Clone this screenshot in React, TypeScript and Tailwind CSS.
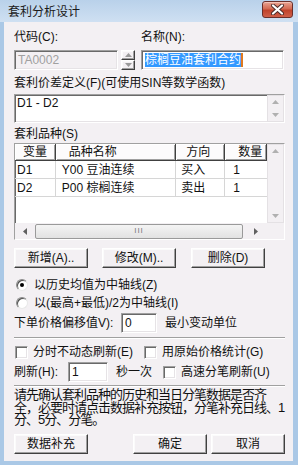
import React from 'react';

// 套利分析设计 — Win 经典风格对话框

const sunken =
  'border border-t-[#a0a0a0] border-l-[#a0a0a0] border-b-white border-r-white shadow-[inset_1px_1px_0_#696969,inset_-1px_-1px_0_#e6e3e6]';
const raised =
  'border border-t-white border-l-white border-b-[#404040] border-r-[#404040] shadow-[inset_-1px_-1px_0_#a0a0a0,inset_1px_1px_0_#fbfbfb]';

type Dir = 'up' | 'down' | 'left' | 'right';

function Tri({ dir, color = '#8a8a8a' }: { dir: Dir; color?: string }) {
  const pts: Record<Dir, string> = {
    up: '0,4 3.5,0 7,4',
    down: '0,0 3.5,4 7,0',
    left: '4,0 0,3.5 4,7',
    right: '0,0 4,3.5 0,7',
  };
  const horiz = dir === 'up' || dir === 'down';
  return (
    <svg width={horiz ? 7 : 4} height={horiz ? 4 : 7} viewBox={horiz ? '0 0 7 4' : '0 0 4 7'}>
      <polygon points={pts[dir]} fill={color} />
    </svg>
  );
}

function Btn({ children, className = '' }: { children: React.ReactNode; className?: string }) {
  return (
    <div className={`flex h-[20px] w-[74px] items-center justify-center bg-[#f3f0f3] ${raised} ${className}`}>
      {children}
    </div>
  );
}

function Check({ className = '' }: { className?: string }) {
  return <div className={`h-[13px] w-[13px] shrink-0 bg-white ${sunken} ${className}`} />;
}

function Radio({ checked }: { checked?: boolean }) {
  return (
    <div className="flex h-[12px] w-[12px] shrink-0 items-center justify-center rounded-full border border-t-[#8a8a8a] border-l-[#8a8a8a] border-b-[#e8e8e8] border-r-[#e8e8e8] bg-white shadow-[inset_1px_1px_0_#505050]">
      {checked && <div className="h-[4px] w-[4px] rounded-full bg-black" />}
    </div>
  );
}

function CloseBtn() {
  return (
    <div className="flex h-[17px] w-[31px] items-center justify-center rounded-[3px] border border-[#6b2f2a] bg-[linear-gradient(#e9a493,#d46a52_45%,#c0432b_55%,#d0604a)] shadow-[inset_0_1px_0_#f3c2b6]">
      <svg width="13" height="11" viewBox="0 0 13 11">
        <path d="M2 1.5 L11 9.5 M11 1.5 L2 9.5" stroke="#4a2a28" strokeWidth="4" strokeLinecap="round" />
        <path d="M2 1.5 L11 9.5 M11 1.5 L2 9.5" stroke="#ffffff" strokeWidth="2.2" strokeLinecap="round" />
      </svg>
    </div>
  );
}

const rows = [
  { v: 'D1', name: 'Y00 豆油连续', dir: '买入', qty: '1' },
  { v: 'D2', name: 'P00 棕榈连续', dir: '卖出', qty: '1' },
];

const cols = ['w-[41px]', 'w-[121px]', 'w-[49px]', 'w-[42px]'];
const heads = [
  { t: '变量', pad: 'pl-[8px]' },
  { t: '品种名称', pad: 'pl-[13px]' },
  { t: '方向', pad: 'pl-[10px]' },
  { t: '数量', pad: 'pl-[13px]' },
];

export default function App() {
  return (
    <div className="h-[465px] w-[298px] bg-[#aac8e6] pb-[4px] pl-[4px] pr-[5px] font-['Liberation_Sans','Noto_Sans_CJK_SC',sans-serif] text-[12px] leading-[14px] text-[#111]">
      <div className="-ml-[4px] -mr-[5px] flex h-[22px] items-center justify-between bg-[linear-gradient(#b9d1ea,#cfe0f2)] pl-[8px] pr-[5px] pt-[1px]">
        <span className="text-[12px] text-[#1a1a1a]">套利分析设计</span>
        <div className="-mt-[4px]">
          <CloseBtn />
        </div>
      </div>

      <div className="flex h-[439px] flex-col bg-[#f3f0f3] pl-[10px] pr-[8px] pt-[8px]">
        {/* 代码 / 名称 */}
        <div className="flex h-[14px]">
          <span className="w-[127px]">代码(C):</span>
          <span>名称(N):</span>
        </div>
        <div className="mt-[6px] flex h-[20px]">
          <div className={`flex w-[104px] items-center pl-[3px] text-[#a0a0a0] ${sunken} bg-[#f3f0f3]`}>TA0002</div>
          <div className="ml-[3px] flex w-[14px] flex-col">
            <div className={`flex h-[10px] items-center justify-center ${raised} bg-[#f3f0f3]`}>
              <Tri dir="up" color="#9a9a9a" />
            </div>
            <div className={`flex h-[10px] items-center justify-center ${raised} bg-[#f3f0f3]`}>
              <Tri dir="down" color="#9a9a9a" />
            </div>
          </div>
          <div className={`ml-[6px] flex w-[143px] items-center bg-white pl-[3px] ${sunken}`}>
            <span className="bg-[#3399ff] text-white">棕榈豆油套利合约</span>
            <span className="h-[14px] w-[2px] bg-[#e07a1f]" />
          </div>
        </div>

        {/* 价差定义 */}
        <div className="mt-[6px] h-[14px]">套利价差定义(F)(可使用SIN等数学函数)</div>
        <div className={`mt-[4px] flex h-[29px] w-[271px] bg-white ${sunken}`}>
          <div className="flex-1 pl-[2px] pt-[1px]">D1 - D2</div>
          <div className="flex w-[17px] flex-col items-center justify-between border border-[#e4e1e4] bg-[#f3f0f3] py-[4px]">
            <Tri dir="up" color="#b0b0b0" />
            <Tri dir="down" color="#b0b0b0" />
          </div>
        </div>

        {/* 套利品种 */}
        <div className="mt-[4px] h-[14px]">套利品种(S)</div>
        <div className={`mt-[2px] flex h-[97px] w-[271px] flex-col bg-white ${sunken}`}>
          <div className="flex flex-1">
            <div className="flex w-[252px] flex-col">
              <div className="flex h-[17px]">
                {heads.map((h, i) => (
                  <div
                    key={h.t}
                    className={`${cols[i]} ${h.pad} flex items-center border-b border-r border-b-[#404040] border-r-[#404040] bg-[#fcfbfc] shadow-[inset_1px_1px_0_#ffffff,inset_-1px_-1px_0_#a0a0a0]`}
                  >
                    {h.t}
                  </div>
                ))}
              </div>
              {rows.map((r) => (
                <div key={r.v} className="flex h-[18px] border-b border-[#d6d6d6]">
                  <div className={`${cols[0]} border-r border-[#d6d6d6] pl-[2px] pt-[2px]`}>{r.v}</div>
                  <div className={`${cols[1]} border-r border-[#d6d6d6] pl-[6px] pt-[2px]`}>{r.name}</div>
                  <div className={`${cols[2]} border-r border-[#d6d6d6] pl-[5px] pt-[2px]`}>{r.dir}</div>
                  <div className={`${cols[3]} pl-[8px] pt-[2px]`}>{r.qty}</div>
                </div>
              ))}
            </div>
            <div className="flex w-[17px] flex-col items-center justify-between border border-[#e4e1e4] bg-[#f3f0f3] py-[4px]">
              <Tri dir="up" color="#b0b0b0" />
              <Tri dir="down" color="#b0b0b0" />
            </div>
          </div>
          <div className="flex h-[16px] bg-[#f3f0f3]">
            <div className="flex w-[253px] items-center">
              <div className="flex w-[20px] justify-center">
                <Tri dir="left" color="#606060" />
              </div>
              <div className="flex h-[15px] w-[208px] items-center justify-center rounded-[2px] border border-[#9a9a9a] bg-[linear-gradient(#f4f4f4,#e2e2e2)] text-[8px] tracking-[1px] text-[#7a7a7a]">
                III
              </div>
              <div className="flex flex-1 justify-center">
                <Tri dir="right" color="#606060" />
              </div>
            </div>
            <div className="flex-1 bg-[#f3f0f3]" />
          </div>
        </div>

        {/* 按钮 */}
        <div className="mt-[8px] flex">
          <Btn>新增(A)..</Btn>
          <Btn className="ml-[14px]">修改(M)..</Btn>
          <Btn className="ml-[15px]">删除(D)</Btn>
        </div>

        {/* 中轴线 */}
        <div className="mt-[10px] flex h-[14px] items-center pl-[2px]">
          <Radio checked />
          <span className="ml-[6px]">以历史均值为中轴线(Z)</span>
        </div>
        <div className="mt-[4px] flex h-[14px] items-center pl-[2px]">
          <Radio />
          <span className="ml-[6px]">以(最高+最低)/2为中轴线(I)</span>
        </div>

        <div className="mt-[3px] flex h-[20px] items-center">
          <span className="w-[107px]">下单价格偏移值V):</span>
          <div className={`flex h-[20px] w-[36px] items-center bg-white pl-[3px] ${sunken}`}>0</div>
          <span className="ml-[8px]">最小变动单位</span>
        </div>

        <div className="mt-[4px] h-[2px] w-[271px] border-t border-b border-t-[#a0a0a0] border-b-white" />

        {/* 刷新选项 */}
        <div className="mt-[6px] flex h-[14px] items-center">
          <Check className="ml-[1px]" />
          <span className="ml-[5px] w-[111px]">分时不动态刷新(E)</span>
          <Check />
          <span className="ml-[5px]">用原始价格统计(G)</span>
        </div>
        <div className="mt-[3px] flex h-[20px] items-center">
          <span className="w-[54px]">刷新(H):</span>
          <div className={`flex h-[20px] w-[40px] items-center bg-white pl-[3px] ${sunken}`}>1</div>
          <span className="ml-[8px] w-[47px]">秒一次</span>
          <Check />
          <span className="ml-[5px]">高速分笔刷新(U)</span>
        </div>

        <div className="mt-[3px] h-[2px] w-[271px] border-t border-b border-t-[#a0a0a0] border-b-white" />

        <p className="mt-[2px] w-[271px] text-[13px] leading-[12.5px] tracking-[-1px]">
          请先确认套利品种的历史和当日分笔数据是否齐全，必要时请点击数据补充按钮，分笔补充日线、1分、5分、分笔。
        </p>

        <div className="mt-[7px] flex">
          <Btn>数据补充</Btn>
          <Btn className="ml-[45px]">确定</Btn>
          <Btn className="ml-[4px]">取消</Btn>
        </div>
      </div>
    </div>
  );
}
